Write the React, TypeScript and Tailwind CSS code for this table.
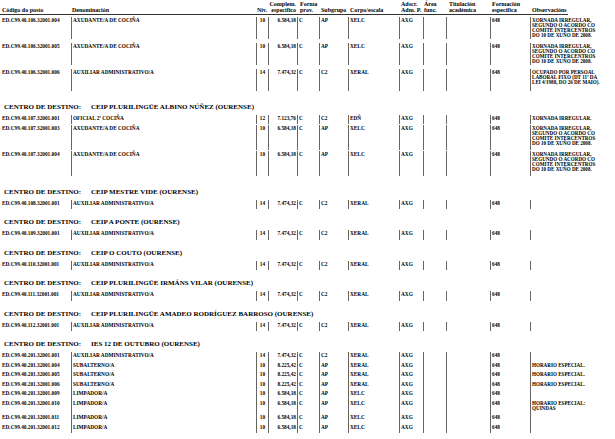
type Row = {
  code: string;
  den: string;
  niv: string;
  comp: string;
  forma: string;
  sub: string;
  corpo: string;
  adscr: string;
  form: string;
  obs: string[];
  size: string;
};

type Section = {
  title?: string;
  rows: Row[];
};

const XORNADA = [
  "XORNADA IRREGULAR,",
  "SEGUNDO O ACORDO CO",
  "COMITÉ INTERCENTROS",
  "DO 10 DE XUÑO DE 2008.",
];

// row heights, including the blank strip under the cell lines
const TALL = "h-[26px] pb-[4px]";
const TALL_END = "h-[29px] pb-[4px]";
const MID = "h-[25.5px] pb-[1px]";
const ONE = "h-[10.5px] pb-[1px]";
const TIGHT = "h-[9.5px]";
const TIGHT_TWO = "h-[14.5px]";

const axudante = (code: string, size: string): Row => ({
  code,
  den: "AXUDANTE/A DE COCIÑA",
  niv: "10",
  comp: "6.584,18",
  forma: "C",
  sub: "AP",
  corpo: "XELC",
  adscr: "AXG",
  form: "648",
  obs: XORNADA,
  size,
});

const auxiliar = (code: string, size: string, obs: string[] = []): Row => ({
  code,
  den: "AUXILIAR ADMINISTRATIVO/A",
  niv: "14",
  comp: "7.474,32",
  forma: "C",
  sub: "C2",
  corpo: "XERAL",
  adscr: "AXG",
  form: "648",
  obs,
  size,
});

const subalterno = (code: string): Row => ({
  code,
  den: "SUBALTERNO/A",
  niv: "10",
  comp: "8.225,42",
  forma: "C",
  sub: "AP",
  corpo: "XERAL",
  adscr: "AXG",
  form: "648",
  obs: ["HORARIO ESPECIAL."],
  size: TIGHT,
});

const limpador = (code: string, size: string = TIGHT, obs: string[] = []): Row => ({
  code,
  den: "LIMPADOR/A",
  niv: "10",
  comp: "6.584,18",
  forma: "C",
  sub: "AP",
  corpo: "XELC",
  adscr: "AXG",
  form: "648",
  obs,
  size,
});

const sections: Section[] = [
  {
    rows: [
      axudante("ED.C99.40.106.32001.004", TALL),
      axudante("ED.C99.40.106.32001.005", TALL),
      auxiliar("ED.C99.40.106.32001.006", TALL, [
        "OCUPADO POR PERSOAL",
        "LABORAL FIXO (DT 11ª DA",
        "LEI 4/1988, DO 26 DE MAIO).",
      ]),
    ],
  },
  {
    title: "CEIP PLURILINGÜE ALBINO NÚÑEZ (OURENSE)",
    rows: [
      {
        code: "ED.C99.40.107.32001.001",
        den: "OFICIAL 2ª COCIÑA",
        niv: "12",
        comp: "7.123,76",
        forma: "C",
        sub: "C2",
        corpo: "EDÑ",
        adscr: "AXG",
        form: "648",
        obs: ["XORNADA IRREGULAR."],
        size: ONE,
      },
      axudante("ED.C99.40.107.32001.003", MID),
      axudante("ED.C99.40.107.32001.004", TALL_END),
    ],
  },
  { title: "CEIP MESTRE VIDE (OURENSE)", rows: [auxiliar("ED.C99.40.108.32001.001", ONE)] },
  { title: "CEIP A PONTE (OURENSE)", rows: [auxiliar("ED.C99.40.109.32001.001", ONE)] },
  { title: "CEIP O COUTO (OURENSE)", rows: [auxiliar("ED.C99.40.110.32001.001", ONE)] },
  {
    title: "CEIP PLURILINGÜE IRMÁNS VILAR (OURENSE)",
    rows: [auxiliar("ED.C99.40.111.32001.001", ONE)],
  },
  {
    title: "CEIP PLURILINGÜE AMADEO RODRÍGUEZ BARROSO (OURENSE)",
    rows: [auxiliar("ED.C99.40.112.32001.001", ONE)],
  },
  {
    title: "IES 12 DE OUTUBRO (OURENSE)",
    rows: [
      auxiliar("ED.C99.40.201.32001.001", TIGHT),
      subalterno("ED.C99.40.201.32001.004"),
      subalterno("ED.C99.40.201.32001.005"),
      subalterno("ED.C99.40.201.32001.006"),
      limpador("ED.C99.40.201.32001.009"),
      limpador("ED.C99.40.201.32001.010", TIGHT_TWO, ["HORARIO ESPECIAL:", "QUINDAS"]),
      limpador("ED.C99.40.201.32001.011"),
      limpador("ED.C99.40.201.32001.012"),
    ],
  },
];

function Header() {
  return (
    <div className="flex items-end h-[15px] text-[6px] leading-[6px]">
      <div className="w-[71px] pl-[2px] pb-[1px] border-b border-[#333]">Código do posto</div>
      <div className="w-[185px] pl-[1px] pb-[1px] border-b border-[#333]">Denominación</div>
      <div className="w-[12px] pl-[1px] pb-[1px] border-b border-[#333]">Niv.</div>
      <div className="w-[29px] pr-[1px] pb-[1px] text-right border-b border-[#333] whitespace-nowrap">
        Complem.
        <br />
        especifico
      </div>
      <div className="w-[22px] pl-[3px] pb-[1px] border-b border-[#333]">
        Forma
        <br />
        prov.
      </div>
      <div className="w-[29px] pl-[2px] pb-[1px] border-b border-[#333]">Subgrupo</div>
      <div className="w-[51px] pl-[2px] pb-[1px] border-b border-[#333]">Corpo/escala</div>
      <div className="w-[24px] pl-[2px] pb-[1px] border-b border-[#333] whitespace-nowrap">
        Adscr.
        <br />
        Adm. P.
      </div>
      <div className="w-[23px] pl-[1px] pb-[1px] border-b border-[#333]">
        Área
        <br />
        func.
      </div>
      <div className="w-[44px] pl-[3px] pb-[1px] border-b border-[#333]">
        Titulación
        <br />
        académica
      </div>
      <div className="w-[40px] pl-[2px] pb-[1px] border-b border-[#333]">
        Formación
        <br />
        específica
      </div>
      <div className="w-[38px] pl-[2px] pb-[1px] border-b border-[#333] whitespace-nowrap">
        Observacións
      </div>
    </div>
  );
}

function DataRow({ row }: { row: Row }) {
  return (
    <div className={`flex text-[5.3px] leading-[5px] ${row.size}`}>
      <div className="w-[71px] pl-[2px] pt-[1px] whitespace-nowrap">{row.code}</div>
      <div className="w-[185px] pl-[1px] pt-[1px] border-l border-[#666] whitespace-nowrap">
        {row.den}
      </div>
      <div className="w-[12px] pt-[1px] border-l border-[#666] text-center">{row.niv}</div>
      <div className="w-[29px] pr-[1px] pt-[1px] border-l border-[#666] text-right whitespace-nowrap">
        {row.comp}
      </div>
      <div className="w-[22px] pl-[1px] pt-[1px] border-l border-[#666]">{row.forma}</div>
      <div className="w-[29px] pl-[1px] pt-[1px] border-l border-[#666]">{row.sub}</div>
      <div className="w-[51px] pl-[1px] pt-[1px] border-l border-[#666]">{row.corpo}</div>
      <div className="w-[24px] pl-[1px] pt-[1px] border-l border-[#666]">{row.adscr}</div>
      <div className="w-[23px] pt-[1px] border-l border-[#666]" />
      <div className="w-[44px] pt-[1px] border-l border-[#666]" />
      <div className="w-[40px] pl-[1px] pt-[1px] border-l border-[#666]">{row.form}</div>
      <div className="w-[85px] pl-[1px] pt-[1px] border-l border-[#666] text-[5.1px] whitespace-nowrap">
        {row.obs.map((line) => (
          <div key={line}>{line}</div>
        ))}
      </div>
    </div>
  );
}

function SectionTitle({ title }: { title: string }) {
  return (
    <div className="flex items-center h-[8px] mt-[8px] mb-[4px] pl-[4px] text-[7px] leading-[8px] whitespace-nowrap">
      <span className="w-[87px]">CENTRO DE DESTINO:</span>
      <span>{title}</span>
    </div>
  );
}

export default function App() {
  return (
    <div
      className="w-[615px] h-[439px] overflow-hidden bg-white text-black font-bold"
      style={{ fontFamily: '"Liberation Serif", "Times New Roman", serif' }}
    >
      <Header />
      <div className="mt-[1.5px]">
        {sections.map((section, i) => (
          <div key={i}>
            {section.title && <SectionTitle title={section.title} />}
            {section.rows.map((row) => (
              <DataRow key={row.code} row={row} />
            ))}
          </div>
        ))}
      </div>
    </div>
  );
}
